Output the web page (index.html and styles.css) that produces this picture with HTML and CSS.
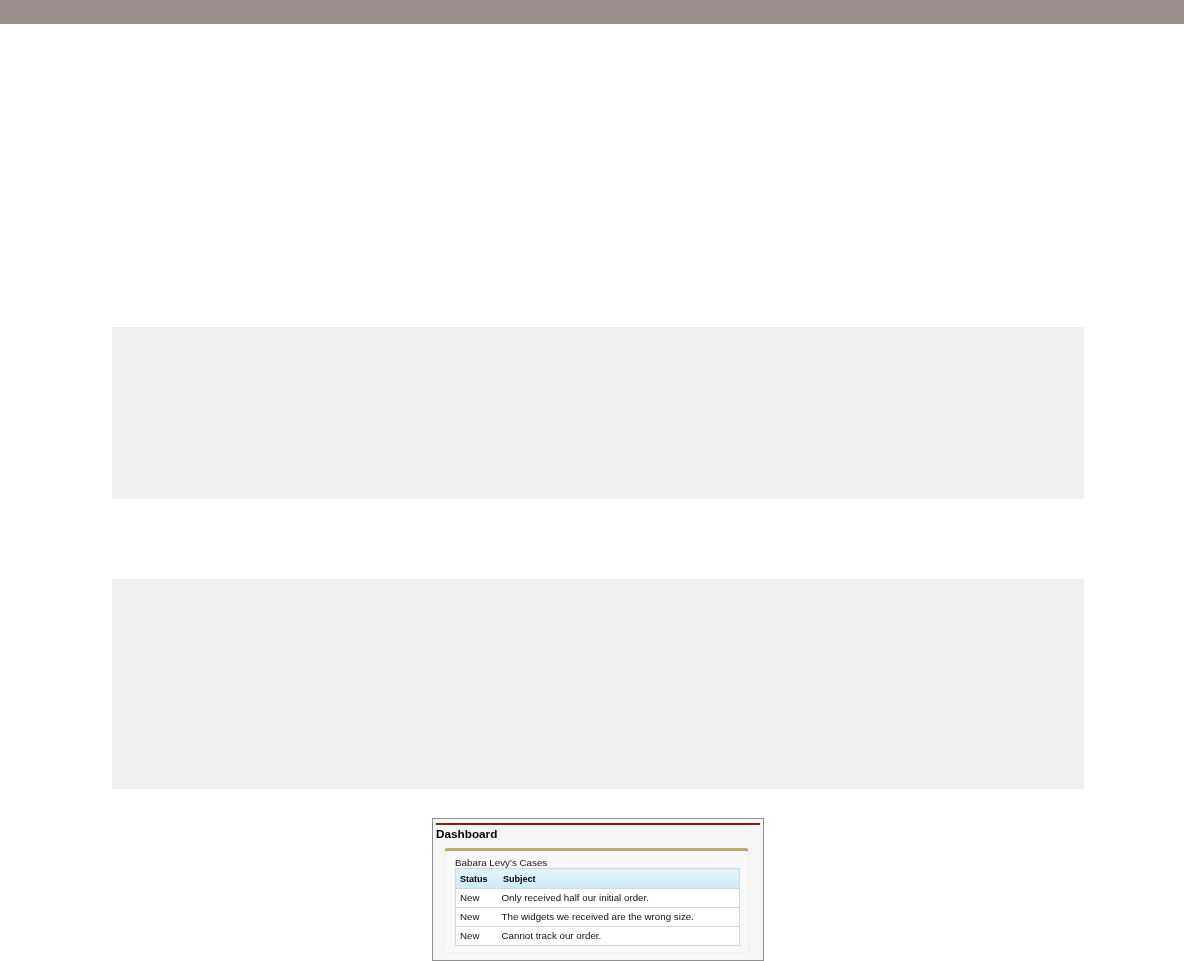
FILE: index.html
```html
<!DOCTYPE html>
<html lang="en">
<head>
<meta charset="utf-8">
<title>Dashboard</title>
<link rel="stylesheet" href="styles.css">
</head>
<body>
<header class="topbar"></header>
<main class="content">
  <div class="block block-a"></div>
  <div class="block block-b"></div>
  <figure class="shot">
    <div class="rule"></div>
    <h2 class="title">Dashboard</h2>
    <section class="card">
      <h3 class="card-title">Babara Levy's Cases</h3>
      <table class="cases">
        <thead>
          <tr><th class="col-status">Status</th><th class="col-subject">Subject</th></tr>
        </thead>
        <tbody>
          <tr><td>New</td><td>Only received half our initial order.</td></tr>
          <tr><td>New</td><td>The widgets we received are the wrong size.</td></tr>
          <tr><td>New</td><td>Cannot track our order.</td></tr>
        </tbody>
      </table>
    </section>
  </figure>
</main>
</body>
</html>
```

FILE: styles.css
```css
html, body {
  margin: 0;
  padding: 0;
  background: #fff;
}
body {
  font-family: "Liberation Sans", Arial, sans-serif;
  color: #000;
}
.topbar {
  height: 24px;
  background: #9b8f8d;
}
.content {
  padding: 303px 100px 0 112px;
  display: flex;
  flex-direction: column;
  align-items: center;
}
.block {
  width: 100%;
  background: #f0f0f0;
}
.block-a {
  height: 172px;
  margin-bottom: 80px;
}
.block-b {
  height: 210px;
  margin-bottom: 29px;
}
.shot {
  box-sizing: border-box;
  width: 332px;
  height: 143px;
  margin: 0;
  padding: 4px 3px 0;
  background: #f6f6f6;
  border: 1px solid #909090;
  filter: blur(0.3px);
}
.rule {
  height: 2px;
  background: #8b1a1a;
}
.title {
  margin: 2px 0 0;
  font-size: 11.75px;
  line-height: 13px;
  font-weight: bold;
  color: #000;
}
.card {
  box-sizing: border-box;
  width: 305px;
  height: 105px;
  margin: 8px 0 0 8px;
  padding: 6px 10px 0;
  background: #f8f8f8;
  border: 1px solid #efefef;
  border-top: 3px solid #bdaa66;
  border-radius: 4px;
}
.card-title {
  margin: 0;
  font-size: 9.8px;
  line-height: 11px;
  font-weight: normal;
  color: #222;
}
.cases {
  width: 285px;
  table-layout: fixed;
  border-collapse: collapse;
  background: #fff;
  border: 1px solid #d4d8dc;
  font-size: 9.75px;
}
.cases th {
  height: 19px;
  padding: 0 0 0 4px;
  text-align: left;
  font-size: 9px;
  font-weight: bold;
  background: linear-gradient(#e6f5fa, #cdeaf5);
  border-bottom: 1px solid #d4d8dc;
}
.cases .col-status {
  width: 37px;
  border-right: 1px solid #d8ecf3;
}
.cases .col-subject {
  padding-left: 5px;
}
.cases td {
  height: 16px;
  padding: 0 0 2px 4px;
  border-bottom: 1px solid #d4d8dc;
  color: #111;
}
```
